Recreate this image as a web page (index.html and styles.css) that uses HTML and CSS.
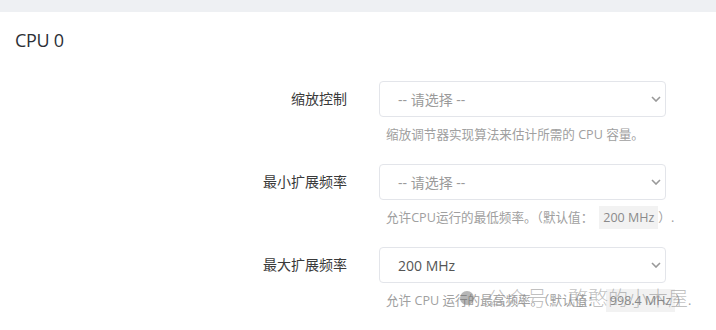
FILE: index.html
```html
<!DOCTYPE html>
<html lang="zh">
<head>
<meta charset="utf-8">
<link rel="stylesheet" href="styles.css">
</head>
<body>
<div class="topbar"></div>
<div class="panel">
  <h2 class="title">CPU 0</h2>
  <div class="form">
    <div class="row">
      <label class="label">缩放控制</label>
      <div class="field">
        <div class="select placeholder"><span>-- 请选择 --</span><svg class="chev" viewBox="0 0 10 6" width="10" height="6"><path d="M1 1l4 4 4-4" fill="none" stroke="#999" stroke-width="1.6"/></svg></div>
        <div class="help">缩放调节器实现算法来估计所需的 CPU 容量。</div>
      </div>
    </div>
    <div class="row">
      <label class="label">最小扩展频率</label>
      <div class="field">
        <div class="select placeholder"><span>-- 请选择 --</span><svg class="chev" viewBox="0 0 10 6" width="10" height="6"><path d="M1 1l4 4 4-4" fill="none" stroke="#999" stroke-width="1.6"/></svg></div>
        <div class="help">允许CPU运行的最低频率。（默认值：<code class="code">200 MHz</code>）.</div>
      </div>
    </div>
    <div class="row">
      <label class="label">最大扩展频率</label>
      <div class="field">
        <div class="select value"><span>200 MHz</span><svg class="chev" viewBox="0 0 10 6" width="10" height="6"><path d="M1 1l4 4 4-4" fill="none" stroke="#999" stroke-width="1.6"/></svg></div>
        <div class="help">允许 CPU 运行的最高频率。（默认值：<code class="code">998.4 MHz</code>）.</div>
      </div>
    </div>
  </div>
</div>
<div class="watermark"><span class="wm-dot"></span><span class="wm-a">公众号</span><span class="wm-b">憨憨的小木屋</span></div>
</body>
</html>
```
FILE: styles.css
```css
html, body {
  margin: 0;
  padding: 0;
  background: #fff;
  font-family: "Open Sans", "Noto Sans CJK SC", sans-serif;
  overflow: hidden;
}
.topbar {
  height: 12px;
  background: #eef0f3;
}
.panel {
  padding: 0 15px;
}
.title {
  margin: 0;
  padding-top: 18px;
  height: 51px;
  box-sizing: border-box;
  font-size: 18px;
  font-weight: 500;
  color: #2c2f36;
  line-height: 20px;
  letter-spacing: -0.3px;
}
.form {
  padding-top: 18px;
  display: flex;
  flex-direction: column;
  gap: 18px;
}
.row {
  display: grid;
  grid-template-columns: 333px 287px;
  column-gap: 31px;
}
.label {
  text-align: right;
  font-size: 14px;
  color: #3a3a3a;
  line-height: 36px;
  padding-right: 1px;
}
.field {
  display: flex;
  flex-direction: column;
}
.select {
  height: 36px;
  box-sizing: border-box;
  border: 1px solid #e3e5ea;
  border-radius: 4px;
  display: flex;
  align-items: center;
  justify-content: space-between;
  padding: 0 4px 0 18px;
  font-size: 14px;
}
.placeholder { color: #9a9a9a; }
.value { color: #555; }
.help {
  margin-top: 7px;
  padding-left: 7px;
  font-size: 12.6px;
  color: #a0a0a0;
  line-height: 22px;
  height: 22px;
  white-space: nowrap;
}
.code {
  font-family: "Open Sans", "Noto Sans CJK SC", sans-serif;
  background: #f2f2f2;
  padding: 3px 4px;
  margin-left: 6px;
  color: #8a8a8a;
  font-size: 12.5px;
}
.watermark {
  position: absolute;
  left: 460px;
  top: 286px;
  font-size: 20px;
  line-height: 24px;
  color: rgba(130, 130, 130, 0.5);
  font-family: "Noto Sans CJK SC", sans-serif;
  font-weight: 300;
  display: flex;
  align-items: center;
}
.wm-dot {
  width: 14px;
  height: 14px;
  border-radius: 50%;
  background: rgba(110, 110, 110, 0.5);
  margin-right: 13px;
}
.wm-a {
  margin-right: 21px;
}
```
